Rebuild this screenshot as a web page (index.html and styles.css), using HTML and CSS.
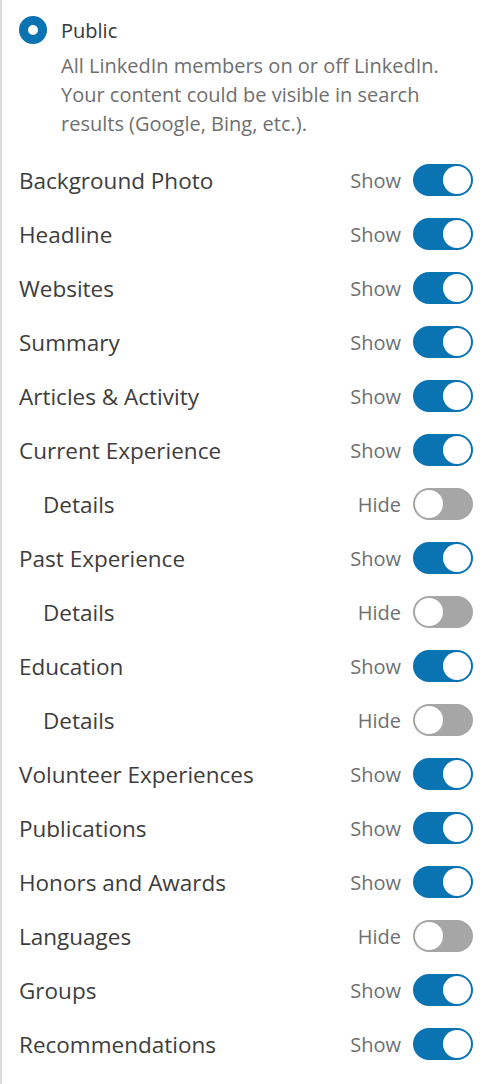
FILE: index.html
```html
<!DOCTYPE html>
<html lang="en">
<head>
  <meta charset="UTF-8">
  <title>Public profile visibility</title>
  <meta name="viewport" content="width=device-width, initial-scale=1">
  <link rel="stylesheet" href="styles.css">
</head>
<body>
  <div class="panel">
    <div class="audience">
      <label class="radio-row">
        <span class="radio checked"></span>
        <span class="radio-label">Public</span>
      </label>
      <p class="audience-desc">All LinkedIn members on or off LinkedIn. Your content could be visible in search results (Google, Bing, etc.).</p>
    </div>
    <ul class="sections" id="sections"></ul>
  </div>
  <script>
    const sections = [
      ['Background Photo', true],
      ['Headline', true],
      ['Websites', true],
      ['Summary', true],
      ['Articles & Activity', true],
      ['Current Experience', true],
      ['Details', false, true],
      ['Past Experience', true],
      ['Details', false, true],
      ['Education', true],
      ['Details', false, true],
      ['Volunteer Experiences', true],
      ['Publications', true],
      ['Honors and Awards', true],
      ['Languages', false],
      ['Groups', true],
      ['Recommendations', true]
    ];

    let html = '';
    sections.forEach(([name, on, sub]) => {
      html += `<li class="row${sub ? ' sub' : ''}">
        <span class="row-name">${name.replace('&', '&amp;')}</span>
        <span class="state">${on ? 'Show' : 'Hide'}</span>
        <span class="toggle${on ? ' on' : ''}"><span class="knob"></span></span>
      </li>`;
    });
    document.getElementById('sections').innerHTML = html;
  </script>
</body>
</html>
```

FILE: styles.css
```css
body {
  margin: 0;
  background: #fff;
  font-family: "Open Sans", "Noto Sans", Arial, sans-serif;
  color: #3d3d3d;
}
.panel {
  border-left: 2px solid #dcdcdc;
  min-height: 1084px;
  box-sizing: border-box;
  padding: 16px 18px 0 17px;
}
.radio-row {
  display: flex;
  align-items: center;
  gap: 14px;
  height: 28px;
}
.radio {
  width: 28px;
  height: 28px;
  border-radius: 50%;
  box-sizing: border-box;
  border: 9px solid #0a73b1;
  background: #fff;
}
.radio-label {
  font-size: 20px;
  color: #383838;
}
.audience-desc {
  margin: 7px 0 0 42px;
  font-size: 20px;
  line-height: 29px;
  color: #6f6f6f;
  max-width: 392px;
}
.sections {
  list-style: none;
  margin: 15px 0 0;
  padding: 0;
}
.row {
  display: flex;
  align-items: center;
  height: 54px;
}
.row.sub .row-name {
  padding-left: 24px;
}
.row-name {
  flex: 1;
  font-size: 22.5px;
  color: #3d3d3d;
}
.state {
  font-size: 20px;
  color: #707070;
  margin-right: 12px;
}
.toggle {
  position: relative;
  width: 60px;
  height: 32px;
  border-radius: 16px;
  background: #a6a6a6;
}
.toggle .knob {
  position: absolute;
  top: 2px;
  left: 2px;
  width: 28px;
  height: 28px;
  border-radius: 50%;
  background: #fff;
}
.toggle.on {
  background: #0a73b1;
}
.toggle.on .knob {
  left: 30px;
}
```
